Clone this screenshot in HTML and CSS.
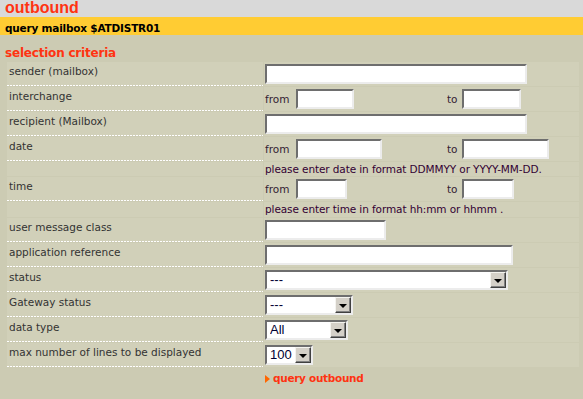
FILE: index.html
```html
<!DOCTYPE html>
<html lang="en">
<head>
<meta charset="utf-8">
<title>outbound</title>
<link rel="stylesheet" href="styles.css">
</head>
<body>
<div class="title">outbound</div>
<div class="subtitle">query mailbox $ATDISTR01</div>
<div class="section">selection criteria</div>
<div class="form">
  <div class="label">sender (mailbox)</div>
  <div class="value"><input class="field w-sender" type="text"></div>

  <div class="label">interchange</div>
  <div class="value">
    <span class="from">from <input class="field w-ic-from" type="text"></span>
    <span class="to">to <input class="field w-ic-to" type="text"></span>
  </div>

  <div class="label">recipient (Mailbox)</div>
  <div class="value"><input class="field w-sender" type="text"></div>

  <div class="label">date</div>
  <div class="value">
    <span class="from">from <input class="field w-date-from" type="text"></span>
    <span class="to">to <input class="field w-date-to" type="text"></span>
  </div>

  <div class="label blank hint"></div>
  <div class="value hint">please enter date in format DDMMYY or YYYY-MM-DD.</div>

  <div class="label">time</div>
  <div class="value">
    <span class="from">from <input class="field w-time-from" type="text"></span>
    <span class="to">to <input class="field w-time-to" type="text"></span>
  </div>

  <div class="label blank hint hint-tall"></div>
  <div class="value hint hint-tall">please enter time in format hh:mm or hhmm .</div>

  <div class="label">user message class</div>
  <div class="value"><input class="field w-umc" type="text"></div>

  <div class="label">application reference</div>
  <div class="value"><input class="field w-appref" type="text"></div>

  <div class="label">status</div>
  <div class="value"><span class="select w-status"><select><option>---</option></select><span class="drop"></span></span></div>

  <div class="label">Gateway status</div>
  <div class="value"><span class="select w-gateway"><select><option>---</option></select><span class="drop"></span></span></div>

  <div class="label">data type</div>
  <div class="value"><span class="select w-datatype"><select><option>All</option></select><span class="drop"></span></span></div>

  <div class="label">max number of lines to be displayed</div>
  <div class="value"><span class="select w-max"><select><option>100</option></select><span class="drop"></span></span></div>

  <div class="action"><a href="#" class="link">query outbound</a></div>
</div>
</body>
</html>
```
FILE: styles.css
```css
html, body {
  margin: 0;
  padding: 0;
  background: #cccbb3;
  font-family: "DejaVu Sans", Verdana, sans-serif;
  font-size: 10.5px;
  color: #333333;
}

.title {
  background: #d9d9d9;
  color: #ff3311;
  font-family: "Liberation Sans", Arial, sans-serif;
  font-weight: bold;
  font-size: 16px;
  line-height: 16px;
  height: 16px;
  padding: 0 5px 1px 5px;
}

.subtitle {
  background: #ffcc33;
  color: #000000;
  font-weight: bold;
  font-size: 10.5px;
  letter-spacing: -0.2px;
  line-height: 14px;
  height: 14px;
  padding: 4px 5px 0 5px;
}

.section {
  color: #ff3311;
  font-weight: bold;
  font-size: 12px;
  letter-spacing: -0.2px;
  line-height: 16px;
  padding: 10px 5px 0 5px;
}

.form {
  display: grid;
  grid-template-columns: 256px 1fr;
  column-gap: 1px;
  row-gap: 1px;
  margin: 1px 4px 0 7px;
}

.label {
  box-sizing: border-box;
  height: 24px;
  padding: 3px 0 0 2px;
  line-height: 13px;
  background:
    repeating-linear-gradient(90deg, #ffffff 0 2px, transparent 2px 3px) left bottom / 100% 1px no-repeat,
    #d1d0b9;
  color: #333333;
  white-space: nowrap;
}

.label.blank {
  background: #d1d0b9;
}

.value {
  box-sizing: border-box;
  height: 24px;
  padding-left: 1px;
  display: flex;
  align-items: center;
  background: #d1d0b9;
  color: #332233;
}

.hint {
  height: 14px;
  line-height: 14px;
}

.hint-tall {
  height: 15px;
  line-height: 15px;
}

.value.hint {
  color: #330033;
  letter-spacing: -0.1px;
  white-space: nowrap;
}

.from {
  display: flex;
  align-items: center;
  gap: 7px;
  width: 182px;
}

.to {
  display: flex;
  align-items: center;
  gap: 4px;
}

.field {
  box-sizing: border-box;
  height: 20px;
  margin: 0;
  padding: 0 2px;
  border: 2px solid;
  border-color: #6e6e6e #ececec #ececec #6e6e6e;
  background: #ffffff;
  font-family: "Liberation Sans", Arial, sans-serif;
  font-size: 13px;
  outline: none;
}

.w-sender { width: 262px; }
.w-ic-from { width: 58px; }
.w-ic-to { width: 59px; }
.w-date-from { width: 86px; }
.w-date-to { width: 87px; }
.w-time-from { width: 51px; }
.w-time-to { width: 52px; }
.w-umc { width: 121px; }
.w-appref { width: 248px; }
.w-status { width: 243px; }
.w-gateway { width: 88px; }
.w-datatype { width: 83px; }
.w-max { width: 48px; }

.select {
  box-sizing: border-box;
  display: inline-flex;
  height: 20px;
  border: 2px solid;
  border-color: #6e6e6e #ececec #ececec #6e6e6e;
  background: #ffffff;
}

.select select {
  flex: 1;
  min-width: 0;
  height: 16px;
  margin: 0;
  padding: 0 0 0 3px;
  border: none;
  background: #ffffff;
  -webkit-appearance: none;
  appearance: none;
  font-family: "Liberation Sans", Arial, sans-serif;
  font-size: 13px;
  line-height: 16px;
  color: #000033;
  outline: none;
}

.drop {
  box-sizing: border-box;
  width: 16px;
  height: 16px;
  flex: none;
  display: flex;
  align-items: center;
  justify-content: center;
  background: #d4d0c8;
  border-top: 1px solid #f4f3ef;
  border-left: 1px solid #f4f3ef;
  border-right: 1px solid #404040;
  border-bottom: 1px solid #404040;
  box-shadow: inset -1px -1px 0 #808080;
}

.drop::after {
  content: "";
  width: 0;
  height: 0;
  border-left: 4px solid transparent;
  border-right: 4px solid transparent;
  border-top: 4px solid #000000;
  margin: 1px 1px 0 0;
}

.action {
  grid-column: 2;
  padding: 4px 0 0 1px;
  line-height: 13px;
}

.link {
  display: inline-flex;
  align-items: center;
  color: #ff3311;
  font-weight: bold;
  letter-spacing: -0.3px;
  text-decoration: none;
}

.link::before {
  content: "";
  width: 0;
  height: 0;
  border-left: 5px solid #ff6600;
  border-top: 4.5px solid transparent;
  border-bottom: 4.5px solid transparent;
  margin-right: 3px;
}
```
